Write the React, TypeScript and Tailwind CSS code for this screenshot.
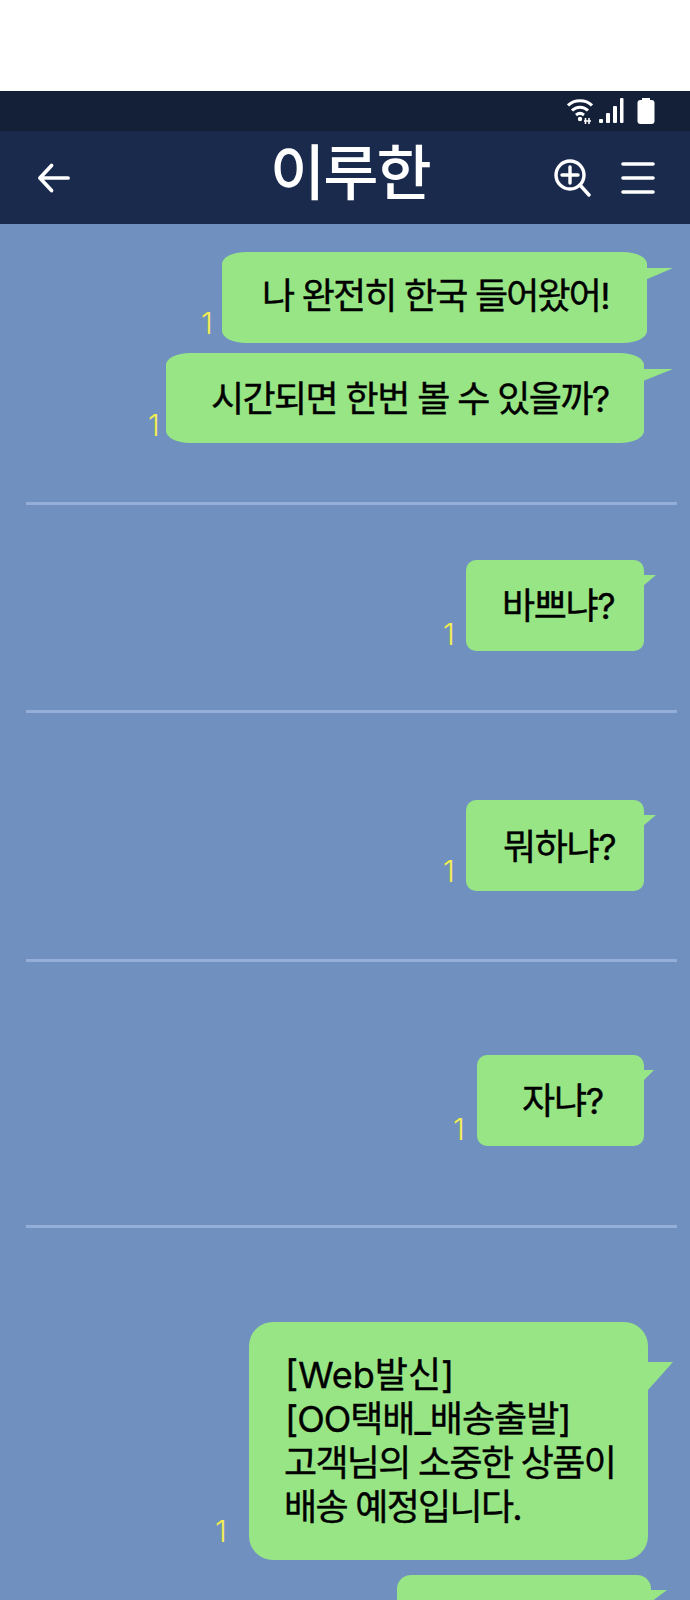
const FONT = "font-['Inter','Noto_Sans_CJK_KR','Noto_Sans',sans-serif]";
const TAIL = "absolute bg-[#98e585] [clip-path:polygon(0_0,100%_0,0_100%)]";

type BubbleProps = {
  lines: { text: string; tracking: string }[];
  box: string;
  text: string;
  count?: string;
  tail: string;
};

function Bubble({ lines, box, text, count, tail }: BubbleProps) {
  return (
    <div className={`relative bg-[#98e585] ${box}`}>
      {count && (
        <span className={`absolute text-[30px] font-light leading-none text-[#f4ee4e] ${count}`}>1</span>
      )}
      <div className={`${TAIL} ${tail}`} />
      <div className={`whitespace-nowrap text-black [-webkit-text-stroke:0.4px_black] ${text}`}>
        {lines.map((l) => (
          <div key={l.text} className={l.tracking}>{l.text}</div>
        ))}
      </div>
    </div>
  );
}

function Divider({ className }: { className: string }) {
  return <div className={`ml-[26px] mr-[13px] h-[3px] bg-[#94aed7] ${className}`} />;
}

export default function App() {
  return (
    <div className={`h-[1600px] w-[690px] overflow-hidden bg-white ${FONT}`}>
      <div className="h-[91px]" />
      <div className="flex h-[40px] items-center justify-end bg-[#141f38] pr-[35px]">
        <svg width="26" height="28" viewBox="0 0 26 28" fill="none" stroke="white" strokeWidth="3">
          <path d="M1 8.500C7 2 19 2 25 8.500" />
          <path d="M5 13.500c4.500-4.500 11.500-4.500 16 0" />
          <path d="M9 18c2.500-2 5.500-2 8 0" />
          <circle cx="13" cy="22" r="2.200" fill="white" stroke="none" />
          <path d="M18.500 27v-6M22 27v-6M17 24h7" strokeWidth="1.600" />
        </svg>
        <svg width="25" height="28" viewBox="0 0 25 28" fill="white" className="ml-[6px]">
          <rect x="0" y="22" width="4" height="4" rx="1" />
          <rect x="7" y="16" width="4" height="10" rx="1" />
          <rect x="14" y="9" width="4" height="17" rx="1" />
          <rect x="21" y="1" width="3.500" height="25" rx="1" />
        </svg>
        <svg width="18" height="28" viewBox="0 0 18 28" fill="white" className="ml-[13px]">
          <rect x="5" y="1" width="8" height="3" />
          <rect x="0.500" y="3" width="17" height="24" rx="3" />
        </svg>
      </div>
      <header className="relative flex h-[93px] items-center justify-between bg-[#1a2a4d] pl-[37px] pr-[35px]">
        <svg width="33" height="36" viewBox="0 0 34 36" fill="none" stroke="white" strokeWidth="3.800" strokeLinecap="round" strokeLinejoin="round">
          <path d="M32 18H3M15 5 3 18l12 13" />
        </svg>
        <h1 className="absolute left-[270px] top-[2px] text-[60px] font-medium leading-[80px] tracking-[-2px] text-white">이루한</h1>
        <div className="flex items-center gap-[29px]">
          <svg width="38" height="38" viewBox="0 0 38 38" fill="none" stroke="white" strokeWidth="3.400" strokeLinecap="round">
            <circle cx="16" cy="16" r="14" />
            <path d="M16 8v16M8 16h16M26 26l9 10" />
          </svg>
          <svg width="34" height="36" viewBox="0 0 34 36" fill="none" stroke="white" strokeWidth="3.600" strokeLinecap="round">
            <path d="M2 4h30M2 18h30M2 32h30" />
          </svg>
        </div>
      </header>
      <main className="flex flex-col bg-[#7090bf] pb-[200px]">
        <Bubble
          lines={[{ text: "나 완전히 한국 들어왔어!", tracking: "tracking-[-1.800px]" }]}
          box="ml-[222px] mt-[28px] h-[91px] w-[425px] rounded-[24px/12px]"
          text="pl-[40px] pt-[19px] text-[36px] leading-[50px]"
          count="-left-[21px] top-[56px]"
          tail="-right-[26px] top-[16px] h-[12px] w-[28px]"
        />
        <Bubble
          lines={[{ text: "시간되면 한번 볼 수 있을까?", tracking: "tracking-[-1.600px]" }]}
          box="ml-[166px] mt-[10px] h-[90px] w-[478px] rounded-[24px/12px]"
          text="pl-[45px] pt-[21px] text-[36px] leading-[50px]"
          count="-left-[18px] top-[57px]"
          tail="-right-[29px] top-[16px] h-[12px] w-[30px]"
        />
        <Divider className="mt-[59px]" />
        <Bubble
          lines={[{ text: "바쁘냐?", tracking: "tracking-[-1.400px]" }]}
          box="ml-[466px] mt-[55px] h-[91px] w-[178px] rounded-[10px]"
          text="pl-[36px] pt-[21px] text-[36px] leading-[50px]"
          count="-left-[23px] top-[59px]"
          tail="-right-[12px] top-[15px] h-[11px] w-[13px]"
        />
        <Divider className="mt-[59px]" />
        <Bubble
          lines={[{ text: "뭐하냐?", tracking: "tracking-[-1.400px]" }]}
          box="ml-[466px] mt-[87px] h-[91px] w-[178px] rounded-[10px]"
          text="pl-[37px] pt-[22px] text-[36px] leading-[50px]"
          count="-left-[23px] top-[56px]"
          tail="-right-[12px] top-[15px] h-[11px] w-[13px]"
        />
        <Divider className="mt-[68px]" />
        <Bubble
          lines={[{ text: "자냐?", tracking: "tracking-[-1.200px]" }]}
          box="ml-[477px] mt-[93px] h-[91px] w-[167px] rounded-[10px]"
          text="pl-[45px] pt-[21px] text-[36px] leading-[50px]"
          count="-left-[24px] top-[59px]"
          tail="-right-[10px] top-[15px] h-[11px] w-[11px]"
        />
        <Divider className="mt-[79px]" />
        <Bubble
          lines={[
            { text: "[Web발신]", tracking: "tracking-[0px] pl-[1px]" },
            { text: "[OO택배_배송출발]", tracking: "tracking-[-1px] pl-[1px]" },
            { text: "고객님의 소중한 상품이", tracking: "tracking-[-1.700px]" },
            { text: "배송 예정입니다.", tracking: "tracking-[-1.700px]" },
          ]}
          box="ml-[249px] mt-[94px] h-[238px] w-[399px] rounded-[24px]"
          text="pl-[35px] pt-[31px] text-[36px] leading-[44px]"
          count="-left-[34px] top-[194px]"
          tail="-right-[25px] top-[40px] h-[28px] w-[25px]"
        />
        <Bubble
          lines={[]}
          box="ml-[397px] mt-[15px] h-[90px] w-[254px] rounded-[14px]"
          text=""
          tail="-right-[16px] top-[15px] h-[12px] w-[16px]"
        />
      </main>
    </div>
  );
}
